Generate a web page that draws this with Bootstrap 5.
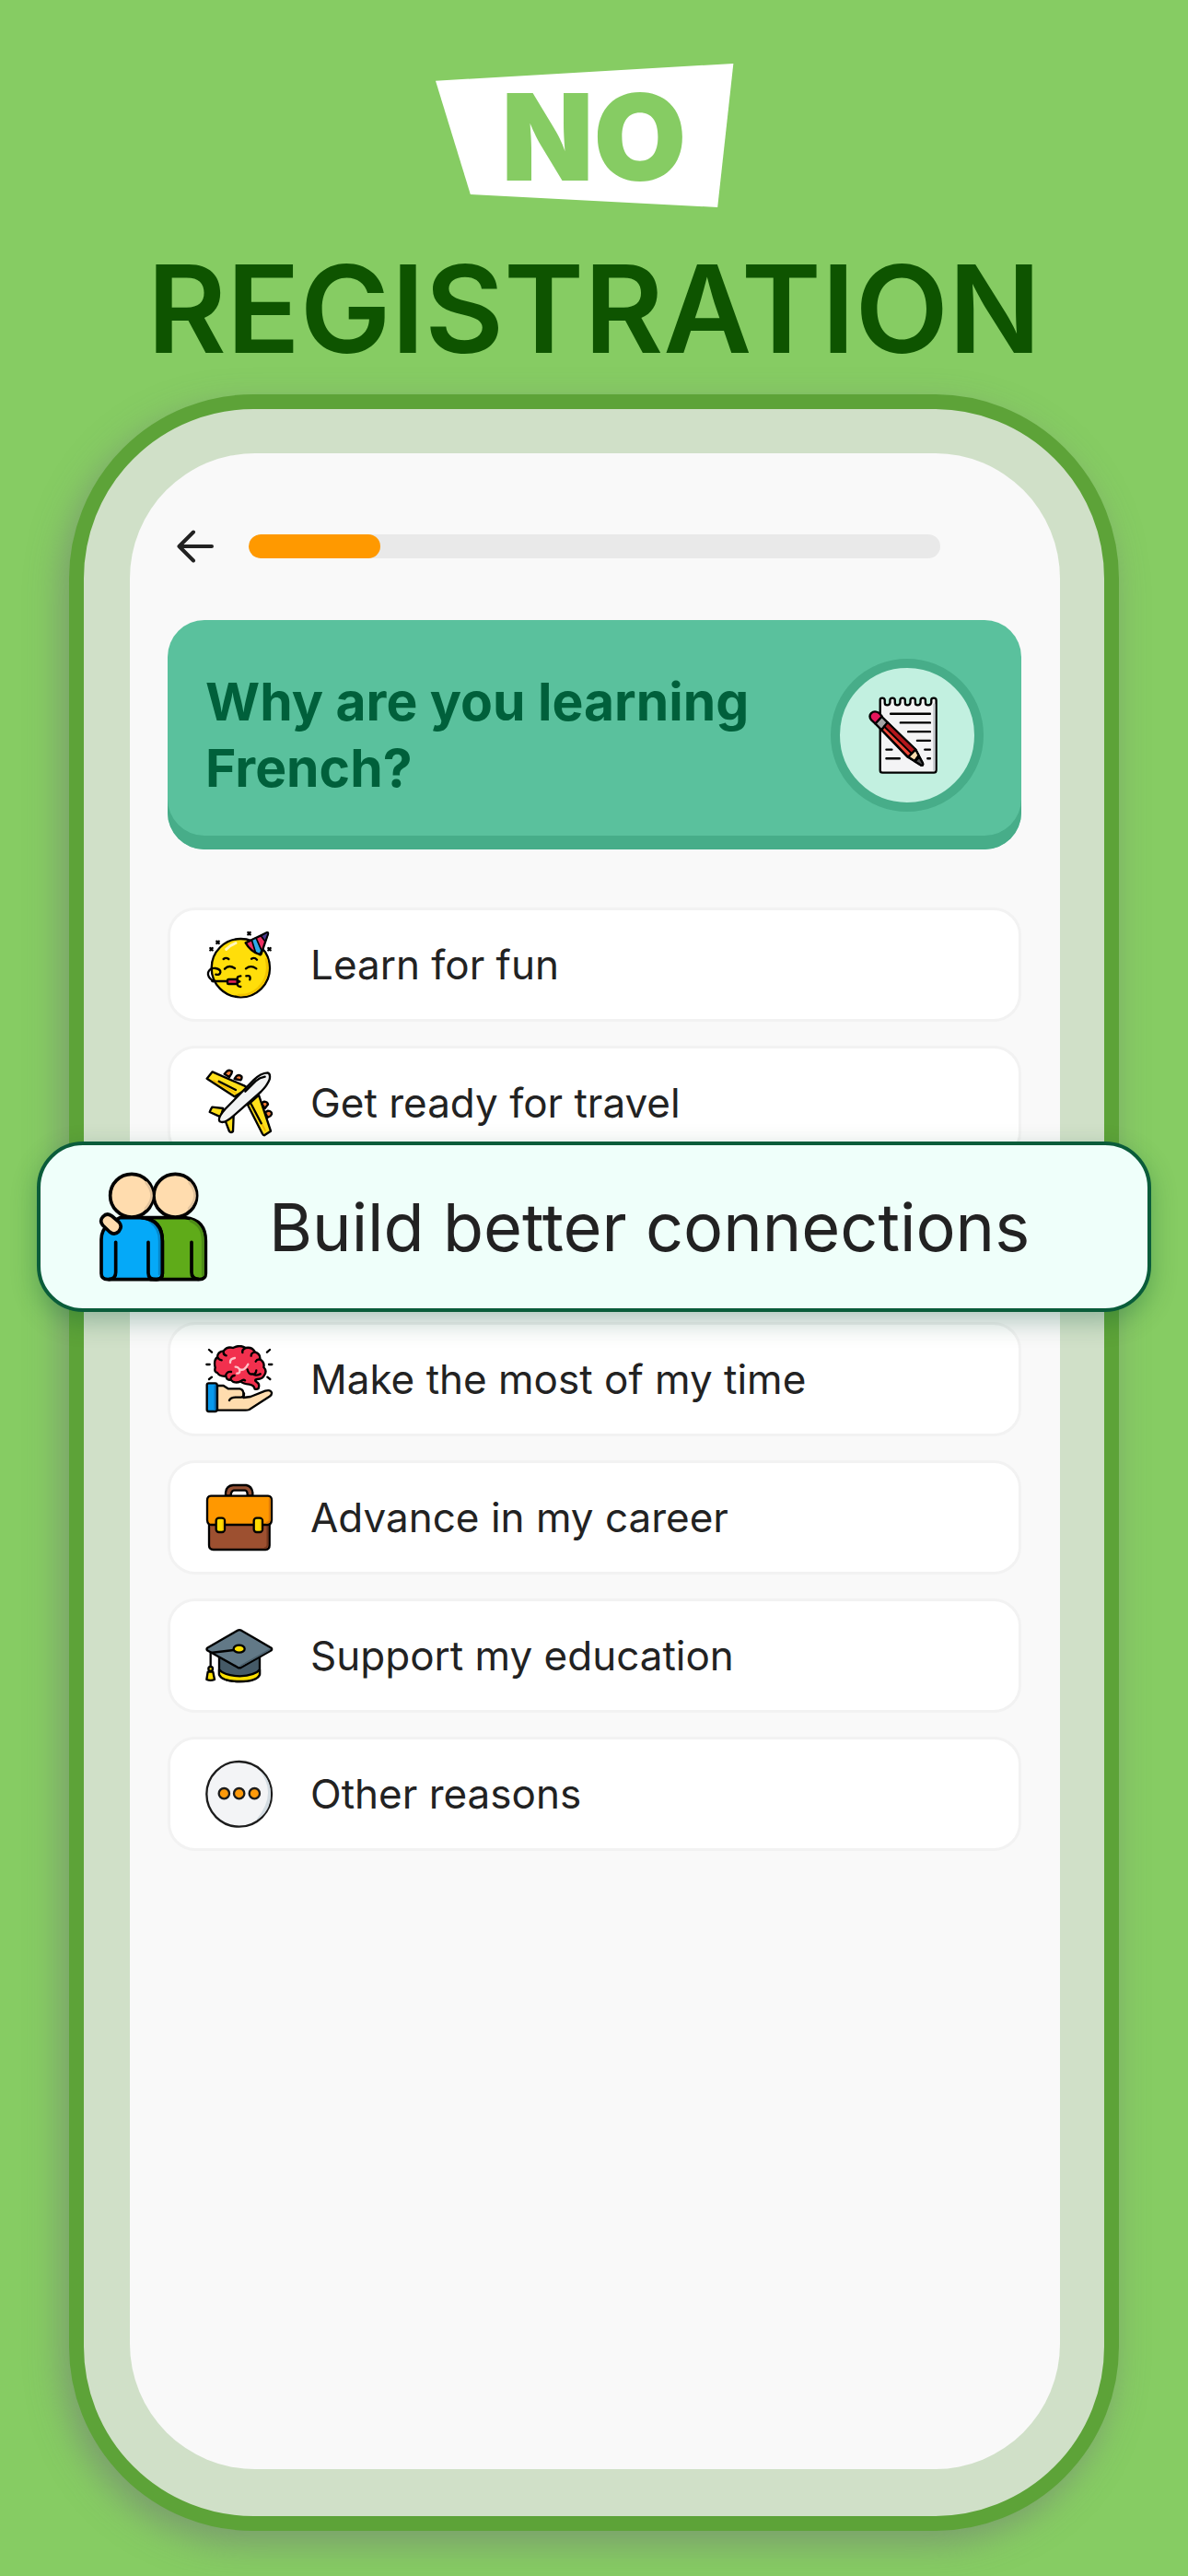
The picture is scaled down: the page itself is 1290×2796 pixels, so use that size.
<!DOCTYPE html>
<html lang="en">
<head>
<meta charset="utf-8">
<meta name="viewport" content="width=device-width, initial-scale=1">
<title>No registration</title>
<link href="https://cdn.jsdelivr.net/npm/bootstrap@5.3.0/dist/css/bootstrap.min.css" rel="stylesheet">
<style>
  :root { --page: #86cc63; --ink: #222; --strip: #47ad89; }
  body { background: var(--page); font-family: Inter, "Liberation Sans", sans-serif; color: var(--ink); }
  .headline { font-size: 132px; line-height: 132px; font-weight: 600; color: #0e5400; padding-top: 69px; margin-bottom: 27px; }
  .no-tag { width: 344px; height: 156px; padding-top: 4px; margin-bottom: 44px; background: #fff; color: var(--page); font-size: 130px; font-weight: 900;
    clip-path: polygon(0 12%, 94% 0, 89% 100%, 11% 91%); }
  .phone { margin: 0 75px 49px; border: 16px solid #5da338; border-radius: 200px; background: #d0e0c8; padding: 48px 48px 51px 50px;
    box-shadow: -8px 14px 36px rgba(112, 112, 120, .5); }
  .screen { background: #f9f9f9; border-radius: 136px; padding: 76px 42px 60px 41px; }
  .topbar { height: 50px; padding: 0 88px 0 10px; gap: 38px; margin-bottom: 55px; }
  .progress { --bs-progress-height: 26px; --bs-progress-bg: #e9e9e9; --bs-progress-border-radius: 13px; --bs-progress-bar-bg: #f90; }
  .progress-bar { border-radius: 13px; }
  .question { background: #5ac19d; border-radius: 40px; box-shadow: inset 0 -15px 0 var(--strip); padding: 41px; margin-bottom: 63px; min-height: 249px; }
  .question h2 { font-size: 57px; line-height: 72px; font-weight: 700; color: #00603b; }
  .medal { width: 166px; height: 166px; border: 10px solid var(--strip); background: #c2f0e0; }
  .reasons { gap: 26px; }
  .reason { height: 124px; }
  .choice { --bs-btn-color: var(--ink); --bs-btn-bg: #fff; --bs-btn-border-color: #f2f2f2; --bs-btn-border-width: 3px; --bs-btn-border-radius: 30px;
    --bs-btn-font-size: 44px; --bs-btn-hover-bg: #fff; --bs-btn-hover-border-color: #ddd; padding: 0 38px; gap: 40px; line-height: 60px; }
  .choice.picked { --bs-btn-bg: #effffa; --bs-btn-border-color: #0a5c3a; --bs-btn-border-width: 4px; --bs-btn-border-radius: 50px; --bs-btn-font-size: 72px;
    position: absolute; z-index: 2; left: -142px; right: -141px; top: -46px; height: 185px; padding: 0 63px; gap: 66px; line-height: 90px;
    box-shadow: 0 10px 28px rgba(0, 80, 50, .3); }
  svg { flex: none; display: block; fill: none; stroke: #000; stroke-linecap: round; stroke-linejoin: round; }
  .choice svg { width: 74px; height: 74px; stroke-width: 7px; }
  .choice.picked svg { width: 119px; height: 119px; stroke-width: 11px; }
</style>
<script src="https://cdn.jsdelivr.net/npm/bootstrap@5.3.0/dist/js/bootstrap.bundle.min.js"></script>
</head>
<body class="d-flex flex-column min-vh-100">
<h1 class="headline d-flex flex-column align-items-center">
  <span class="no-tag d-flex align-items-center justify-content-center">NO</span>
  <span>REGISTRATION</span>
</h1>
<main class="phone flex-grow-1 d-flex">
  <div class="screen flex-grow-1">
    <div class="topbar d-flex align-items-center">
      <button type="button" class="btn border-0 p-0" aria-label="Back">
        <svg width="40" height="36" viewBox="0 0 40 36" style="stroke:#222" stroke-width="4"><path d="M38 18H2.500M18 2.500L2.500 18L18 33.500"/></svg>
      </button>
      <div class="progress flex-grow-1" role="progressbar" aria-label="Progress" aria-valuenow="19" aria-valuemin="0" aria-valuemax="100">
        <div class="progress-bar" style="width:19%"></div>
      </div>
    </div>
    <section class="question d-flex align-items-center justify-content-between">
      <h2 class="mb-0">Why are you learning<br>French?</h2>
      <div class="medal rounded-circle d-flex align-items-center justify-content-center flex-shrink-0">
        <svg width="86" height="86" viewBox="187 343 257 257" stroke-width="7">
          <path fill="#f4f4f5" d="M228 357Q228 351 235 351Q242 351 243 357V366Q243 374 251 374Q259 374 260 366V358Q260 351 268 351Q276 351 276 358V366Q276 374 284 374Q292 374 293 366V358Q293 351 301 351Q309 351 309 358V366Q309 374 317 374Q325 374 326 366V358Q326 351 334 351Q342 351 342 358V366Q342 374 350 374Q358 374 359 366V358Q359 351 367 351Q375 351 375 358V366Q375 374 384 374Q393 374 394 366V357Q394 351 402 351Q410 351 410 358V585Q410 593 402 593H236Q228 593 228 585z"/>
          <path stroke="#c8ccd0" stroke-width="7" d="M403 372v212"/>
          <path d="M262 402h128M294 431h96M319 460h71M348 489h42M373 518h17M382 547h8M248 518h18M248 547h43"/>
          <path fill="#ef4637" d="M232 454L252 430L343 518L366 562Q369 570 361 569L317 542z"/>
          <path fill="#b3161b" stroke="none" d="M243 442L252 432L341 518L330 531z"/>
          <path fill="#fbdcae" d="M343 518L353 537L340 555L319 542z"/>
          <path fill="#555" d="M355 541L366 562Q369 570 361 569L341 557z"/>
          <path fill="#a5a5a5" d="M212 434L233 411L252 430L232 454z"/>
          <path fill="#e5175c" d="M212 434L199 422Q190 409 199 400Q210 390 225 400L234 410z"/>
          <path stroke-width="6" d="M241 443L330 531M232 454L319 542M252 430L343 518"/>
        </svg>
      </div>
    </section>
    <ul class="reasons list-unstyled d-flex flex-column mb-0">
      <li class="reason d-flex">
        <button type="button" class="choice btn w-100 d-flex align-items-center text-start">
          <svg viewBox="68 87 222 222">
            <circle cx="183" cy="209" r="95" fill="#ffde0a"/>
            <path stroke="#f2c400" stroke-width="8" d="M266 180q14 56-26 95q-28 25-64 22"/>
            <path stroke="#fff6bd" stroke-width="9" d="M136 148q14-14 31-20"/>
            <path fill="#ec2f62" d="M199 127L268 94Q273 92 272 98L250 163Q248 168 243 164Q215 155 199 127z"/>
            <path fill="#2ea9e8" stroke-width="5" d="M219 118L233 111L251 152L246 164Q238 162 231 157z"/>
            <path fill="#49398c" stroke-width="5" d="M249 104L268 94Q273 92 272 98L263 123z"/>
            <path d="M127 180q8-7 17 0M218 179q10-6 18 3M131 212q14-15 33-2M200 211q16-13 34 0M201 235q16-4 12 12M183 235q-12 1-11 9t8 9q-9 2-8 9t11 8M90 252h50"/>
            <rect x="140" y="246" width="32" height="15" rx="4" fill="#e72353"/>
            <path d="M94 252q-20-14-17-28q5-16 24-14q17 3 16 13q-2 10-15 7"/>
            <path stroke-width="7" d="M207 93l7 7m0-7l-7 7M105 122l7 7m0-7l-7 7M84 144l7 7m0-7l-7 7M273 144l7 7m0-7l-7 7"/>
          </svg>
          <span>Learn for fun</span>
        </button>
      </li>
      <li class="reason d-flex">
        <button type="button" class="choice btn w-100 d-flex align-items-center text-start">
          <svg viewBox="68 88 222 222">
            <path fill="#f47b35" d="M130 105l8-9q9-6 17 1l-2 7-7 11zM163 121l7-10q9-5 16 2q2 7-3 12zM250 200l10-5q11 1 12 9l-10 13zM262 230l10-5q13 1 12 11q-3 8-13 11z"/>
            <path fill="#ffe01b" d="M91 98L194 143L207 152L163 179L73 120zM206 206L242 174L281 291L260 305Q256 305 254 300z"/>
            <path stroke="#f4b700" stroke-width="5" d="M95 126l72 42M222 210l41 79"/>
            <path d="M112 129l55 28M217 203l33 63"/>
            <path fill="#ffe01b" d="M126 217l-36-4q-6 10-8 16l36 16zM133 258l13 34q5 6 12 0l2-51z"/>
            <path fill="#f2f3f4" d="M115 260Q106 250 132 220L225 125Q248 102 271 101Q281 104 277 123Q270 142 249 163L158 243Q130 268 115 260z"/>
            <path d="M198 162l34-34q13-11 30-14"/>
          </svg>
          <span>Get ready for travel</span>
        </button>
      </li>
      <li class="reason position-relative">
        <button type="button" class="choice picked btn d-flex align-items-center text-start" aria-pressed="true">
          <svg viewBox="230 155 357 357">
            <path fill="#5fab19" d="M370 304H512Q579 311 579 380V486Q579 505 558 505H400z"/>
            <path stroke="#4d8d17" stroke-width="9" d="M530 314Q570 330 570 380V490"/>
            <path d="M533 384V482Q533 503 555 504"/>
            <path fill="#05a9f8" d="M300 304H370Q438 311 438 380V486Q438 505 420 505H260Q239 505 239 486V375Q239 345 262 325z"/>
            <path stroke="#0786c9" stroke-width="9" d="M400 318Q429 338 429 380V488"/>
            <path d="M370 304Q438 311 438 380V486Q438 505 418 505Q392 505 392 484V384M286 384V482Q286 504 264 505"/>
            <circle cx="338" cy="232" r="70" fill="#ffdcae"/>
            <circle cx="480" cy="232" r="70" fill="#ffdcae"/>
            <path stroke="#e2c39c" stroke-width="8" d="M385 190q36 44-2 84M526 190q36 44-2 84"/>
            <path fill="#ffdcae" d="M244 329Q232 314 244 301Q258 286 274 299L297 319Q309 333 296 349Q282 363 266 350z"/>
          </svg>
          <span>Build better connections</span>
        </button>
      </li>
      <li class="reason d-flex">
        <button type="button" class="choice btn w-100 d-flex align-items-center text-start">
          <svg viewBox="68 60 222 222">
            <path fill="#f2304e" d="M100 133Q94 110 107 99Q108 81 127 79Q139 63 158 69Q180 57 199 69Q221 65 229 82Q248 88 246 106Q262 117 258 132Q270 144 260 158Q255 171 237 171Q224 173 236 181Q246 186 241 201Q236 205 229 203Q226 190 211 188Q191 187 183 178Q163 187 151 173Q138 176 135 161Q115 163 107 150Q96 148 100 133z"/>
            <path d="M127 80q-1 13 9 14M108 100q4 8 13 9M134 161q2-16 18-14M150 171q4-12 13-12M197 70q-10 5-8 14M229 83q-12 2-12 12M246 107q-10-2-14 6M205 139q3 18 18 15q7 8 24 0M234 142q0 7-5 11M183 178q9-8 14-3"/>
            <path stroke="#ffc4ca" d="M149 117q-1-13 15-15M166 131q8-1 13 7q15 9 28-16M179 139q4 13-8 13"/>
            <path d="M80 75l9 8M72 123h10M80 171l9-7M278 75l-9 8M285 123h-10M279 171l-9-7"/>
            <path fill="#ffdcae" d="M107 192h20l15 10h38q11 2 12 14v15l23-3 48-19q18-5 21 6q1 7-7 12l-66 43q-5 2-12 2h-92z"/>
            <path d="M146 240q4-10 21-10h18q10-2 9-13"/>
            <rect x="73" y="184" width="33" height="92" rx="6" fill="#0799ec"/>
            <path stroke="#0872bf" stroke-width="5" d="M99 192v76"/>
          </svg>
          <span>Make the most of my time</span>
        </button>
      </li>
      <li class="reason d-flex">
        <button type="button" class="choice btn w-100 d-flex align-items-center text-start">
          <svg viewBox="68 60 222 222">
            <path fill="#955033" d="M134 101V90Q136 68 158 66H201Q219 69 222 90V101H205Q206 84 197 83H161Q151 85 151 101z"/>
            <path fill="#9d5030" d="M80 192H277V262Q277 276 264 276H94Q80 276 80 262z"/>
            <path stroke="#77391f" stroke-width="5" d="M270 200v62q0 7-8 8"/>
            <path fill="#ff9800" d="M86 101H272Q284 102 284 115V179Q283 195 270 195H88Q75 195 74 180V115Q74 102 86 101z"/>
            <path stroke="#df7a09" stroke-width="5" d="M277 111v70q-2 7-9 7"/>
            <rect x="103" y="173" width="28" height="46" rx="9" fill="#ffdc00"/>
            <rect x="226" y="173" width="28" height="46" rx="9" fill="#ffdc00"/>
            <path stroke="#e4ae00" stroke-width="4" d="M126 180v32M249 180v32"/>
          </svg>
          <span>Advance in my career</span>
        </button>
      </li>
      <li class="reason d-flex">
        <button type="button" class="choice btn w-100 d-flex align-items-center text-start">
          <svg viewBox="68 60 222 222">
            <path fill="#455a67" d="M113 170H245V232Q235 255 180 255Q122 255 113 232z"/>
            <path fill="#ffe000" d="M113 217Q130 236 180 238Q230 236 245 217V233Q235 255 180 255Q122 255 113 233z"/>
            <path fill="#627987" d="M74 146L173 89Q179 86 185 89L283 146Q286 150 283 154L185 209Q179 213 173 209L74 154Q71 150 74 146z"/>
            <path stroke="#4c616e" stroke-width="5" d="M276 152l-94 53"/>
            <path d="M160 153L85 162V207"/>
            <ellipse cx="178" cy="149" rx="18" ry="12" fill="#ffe000"/>
            <circle cx="85" cy="214" r="7" fill="#ffe000"/>
            <path fill="#ffe000" d="M76 224H93L98 249Q85 254 72 249z"/>
          </svg>
          <span>Support my education</span>
        </button>
      </li>
      <li class="reason d-flex">
        <button type="button" class="choice btn w-100 d-flex align-items-center text-start">
          <svg viewBox="68 60 222 222" style="stroke:#1c1c1c">
            <circle cx="178" cy="172" r="106" fill="#f3f4f6"/>
            <path fill="#d3dce2" stroke="none" d="M242 93Q307 170 232 258Q281 231 281 172Q281 122 242 93z"/>
            <g fill="#ff9a0a"><circle cx="129" cy="170" r="17"/><circle cx="178" cy="170" r="17"/><circle cx="228" cy="170" r="17"/></g>
          </svg>
          <span>Other reasons</span>
        </button>
      </li>
    </ul>
  </div>
</main>
</body>
</html>
